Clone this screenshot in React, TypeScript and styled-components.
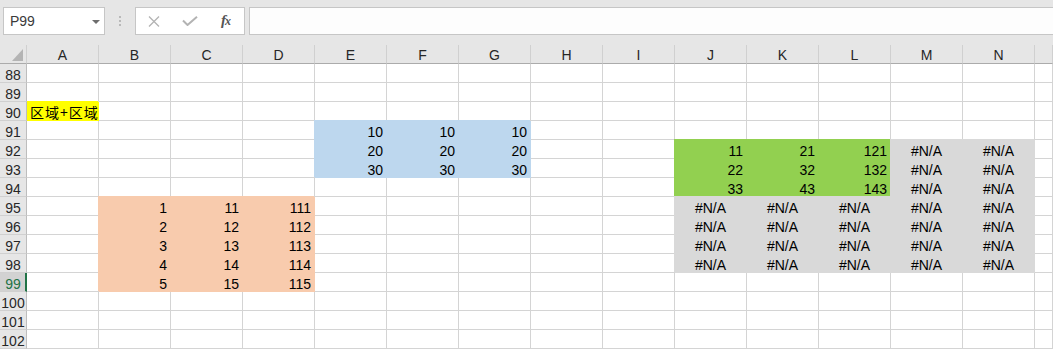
import React, { FC } from 'react';
import styled, { createGlobalStyle } from 'styled-components';

const GlobalStyle = createGlobalStyle`
  html, body {
    margin: 0;
    padding: 0;
    background: #fff;
    overflow: hidden;
  }
  * { box-sizing: border-box; }
`;

const COLS = ['A', 'B', 'C', 'D', 'E', 'F', 'G', 'H', 'I', 'J', 'K', 'L', 'M', 'N', ''];
const FIRST_ROW = 88;
const LAST_ROW = 102;
const ACTIVE_ROW = 99;
const GRID_TEMPLATE = '27px repeat(14, 72px) 1fr';

const YELLOW = '#ffff00';
const BLUE = '#bdd7ee';
const ORANGE = '#f8cbad';
const GREEN = '#92d050';
const GREY = '#d9d9d9';

type CellData = { value: string; fill?: string; align?: 'left' | 'right' | 'center'; cjk?: boolean };

// собираем содержимое листа в карту "A90" -> данные
const buildCells = () => {
  const cells: Record<string, CellData> = {};
  cells.A90 = { value: '区域+区域', fill: YELLOW, align: 'left', cjk: true };

  ['E', 'F', 'G'].forEach((c) => {
    [10, 20, 30].forEach((v, i) => {
      cells[`${c}${91 + i}`] = { value: String(v), fill: BLUE };
    });
  });

  const orange: Record<string, number[]> = { B: [1, 2, 3, 4, 5], C: [11, 12, 13, 14, 15], D: [111, 112, 113, 114, 115] };
  Object.entries(orange).forEach(([c, vals]) => {
    vals.forEach((v, i) => {
      cells[`${c}${95 + i}`] = { value: String(v), fill: ORANGE };
    });
  });

  const green: Record<string, number[]> = { J: [11, 22, 33], K: [21, 32, 43], L: [121, 132, 143] };
  Object.entries(green).forEach(([c, vals]) => {
    vals.forEach((v, i) => {
      cells[`${c}${92 + i}`] = { value: String(v), fill: GREEN };
    });
  });

  ['J', 'K', 'L', 'M', 'N'].forEach((c) => {
    for (let r = 92; r <= 98; r++) {
      const key = `${c}${r}`;
      if (!cells[key]) cells[key] = { value: '#N/A', fill: GREY, align: 'center' };
    }
  });
  return cells;
};

const CELLS = buildCells();

/* ---------- formula bar ---------- */

const Toolbar = styled.div`
  height: 40px;
  background: #e6e6e6;
  display: flex;
  align-items: flex-start;
  padding: 7px 0 0 3px;
  overflow: hidden;
`;

const NameBox = styled.div`
  width: 102px;
  height: 28px;
  background: #fff;
  border: 1px solid #c6c6c6;
  display: flex;
  align-items: center;
  justify-content: space-between;
  padding: 0 4px 0 6px;
  font-family: 'Liberation Sans', Arial, sans-serif;
  font-size: 14px;
  color: #3a3a3a;
`;

const DropArrow = styled.span`
  width: 0;
  height: 0;
  border-left: 4px solid transparent;
  border-right: 4px solid transparent;
  border-top: 4px solid #6d6d6d;
  margin-top: 1px;
`;

const Grip = styled.div`
  width: 30px;
  height: 28px;
  display: flex;
  flex-direction: column;
  align-items: center;
  justify-content: center;
  gap: 2px;
`;

const GripDot = styled.span`
  width: 2px;
  height: 2px;
  background: #b9b9b9;
`;

const ButtonBox = styled.div`
  width: 110px;
  height: 28px;
  background: #fff;
  border: 1px solid #c6c6c6;
  display: flex;
  align-items: center;
`;

const IconSlot = styled.div`
  width: 36px;
  height: 26px;
  display: flex;
  align-items: center;
  justify-content: center;
`;

const Fx = styled.span`
  font-family: 'Liberation Serif', 'Times New Roman', serif;
  font-style: italic;
  font-weight: bold;
  font-size: 15px;
  line-height: 15px;
  color: #555;
  & > small {
    font-size: 12px;
    margin-left: -1px;
  }
`;

const FormulaInput = styled.div`
  flex: 1;
  height: 28px;
  margin-left: 4px;
  margin-right: -2px;
  background: #fdfdfd;
  border: 1px solid #c6c6c6;
`;

/* ---------- sheet ---------- */

const HeaderBar = styled.div`
  display: grid;
  grid-template-columns: ${GRID_TEMPLATE};
  background: #e6e6e6;
  padding-top: 5px;
`;

const Corner = styled.div`
  height: 19px;
  border-right: 1px solid #d0d0d0;
  border-bottom: 1px solid #ababab;
  display: flex;
  align-items: flex-end;
  justify-content: flex-end;
  padding: 0 3px 2px 0;
`;

const ColHead = styled.div`
  height: 19px;
  border-right: 1px solid #d0d0d0;
  border-bottom: 1px solid #ababab;
  display: flex;
  align-items: center;
  justify-content: center;
  padding-top: 2px;
  font-family: 'Liberation Sans', Arial, sans-serif;
  font-size: 14px;
  color: #262626;
`;

const Body = styled.div`
  display: grid;
  grid-template-columns: ${GRID_TEMPLATE};
  grid-auto-rows: 19px;
`;

const RowHead = styled.div<{ $active?: boolean }>`
  position: relative;
  z-index: 1;
  background: ${({ $active }) => ($active ? '#d2d2d2' : '#e6e6e6')};
  border-right: ${({ $active }) => ($active ? '2px solid #217346' : '1px solid #bdbdbd')};
  border-bottom: 1px solid #d0d0d0;
  display: flex;
  align-items: flex-end;
  justify-content: center;
  padding-left: ${({ $active }) => ($active ? '1px' : '0')};
  font-family: 'Liberation Sans', Arial, sans-serif;
  font-size: 14px;
  line-height: 14px;
  color: ${({ $active }) => ($active ? '#217346' : '#262626')};
`;

const justify = { left: 'flex-start', right: 'flex-end', center: 'center' };

const Cell = styled.div<{ $fill?: string; $align: 'left' | 'right' | 'center'; $cjk?: boolean }>`
  background: ${({ $fill }) => $fill || '#fff'};
  border-right: 1px solid ${({ $fill }) => $fill || '#d4d4d4'};
  border-bottom: 1px solid ${({ $fill }) => $fill || '#d4d4d4'};
  box-shadow: ${({ $fill }) => ($fill ? `-1px -1px 0 0 ${$fill}` : 'none')};
  display: flex;
  align-items: flex-end;
  justify-content: ${({ $align }) => justify[$align]};
  padding: 0 3px;
  white-space: nowrap;
  font-family: ${({ $cjk }) => ($cjk ? "'Noto Sans CJK SC', sans-serif" : "'Liberation Sans', Arial, sans-serif")};
  font-size: 14px;
  font-weight: 400;
  letter-spacing: ${({ $cjk }) => ($cjk ? '1px' : 'normal')};
  line-height: ${({ $cjk }) => ($cjk ? '16px' : '14px')};
  color: #000;
`;

const CancelIcon = () => (
  <svg width="12" height="11" viewBox="0 0 12 11">
    <path d="M1 0.5 L11 10.5 M11 0.5 L1 10.5" stroke="#b3b3b3" strokeWidth="1.3" fill="none" />
  </svg>
);

const EnterIcon = () => (
  <svg width="16" height="10" viewBox="0 0 16 10">
    <path d="M1 4.5 L5.5 9 L15 0.8" stroke="#b3b3b3" strokeWidth="2" fill="none" />
  </svg>
);

const CornerTriangle = () => (
  <svg width="11" height="12" viewBox="0 0 11 12">
    <polygon points="11,0 11,12 0,12" fill="#b4b4b4" />
  </svg>
);

const App: FC = () => {
  const rows: number[] = [];
  for (let r = FIRST_ROW; r <= LAST_ROW; r++) rows.push(r);

  return (
    <>
      <GlobalStyle />
      <Toolbar>
        <NameBox>
          P99
          <DropArrow />
        </NameBox>
        <Grip>
          <GripDot />
          <GripDot />
          <GripDot />
        </Grip>
        <ButtonBox>
          <IconSlot><CancelIcon /></IconSlot>
          <IconSlot><EnterIcon /></IconSlot>
          <IconSlot><Fx>f<small>x</small></Fx></IconSlot>
        </ButtonBox>
        <FormulaInput />
      </Toolbar>

      <HeaderBar>
        <Corner><CornerTriangle /></Corner>
        {COLS.map((c, i) => (
          <ColHead key={i}>{c}</ColHead>
        ))}
      </HeaderBar>

      <Body>
        {rows.map((r) => (
          <React.Fragment key={r}>
            <RowHead $active={r === ACTIVE_ROW}>{r}</RowHead>
            {COLS.map((c, i) => {
              const cell = c ? CELLS[`${c}${r}`] : undefined;
              return (
                <Cell key={i} $fill={cell?.fill} $align={cell?.align || 'right'} $cjk={cell?.cjk}>
                  {cell?.value}
                </Cell>
              );
            })}
          </React.Fragment>
        ))}
      </Body>
    </>
  );
};

export default App;
